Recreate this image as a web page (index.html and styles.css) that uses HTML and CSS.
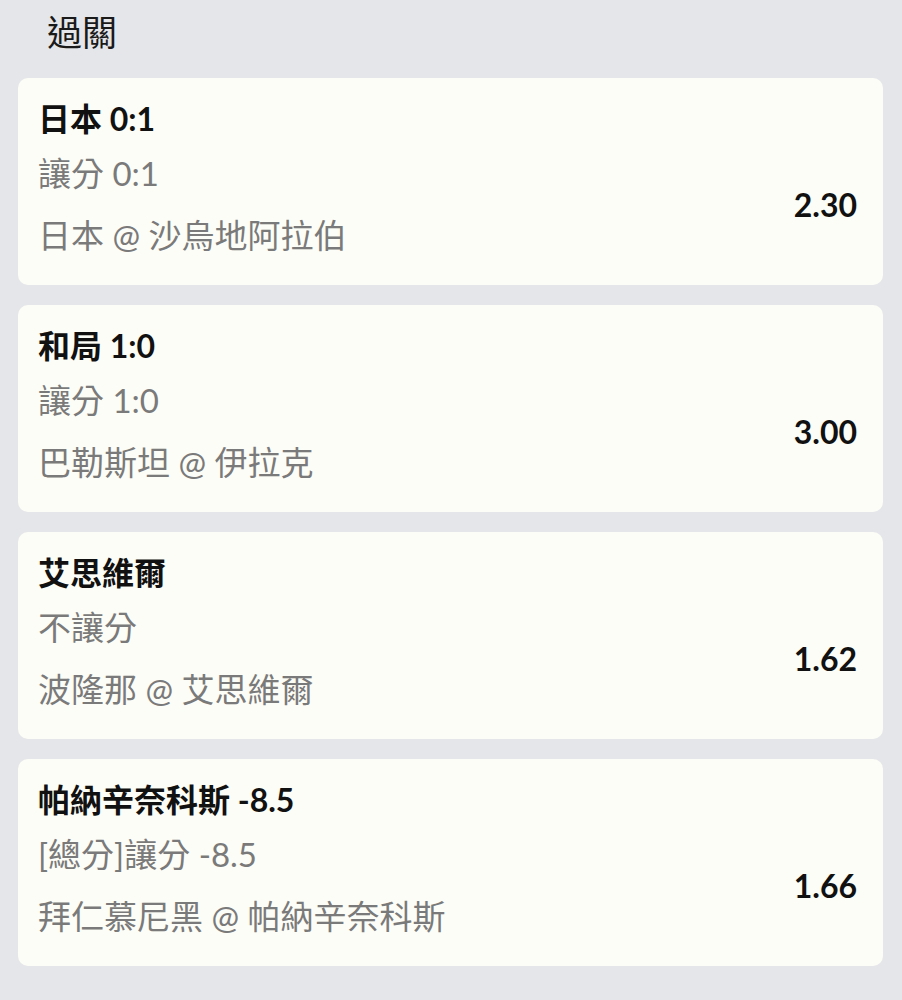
FILE: index.html
```html
<!DOCTYPE html>
<html lang="zh-Hant">
<head>
  <meta charset="UTF-8" />
  <meta name="viewport" content="width=device-width, initial-scale=1.0"/>
  <title>過關</title>
  <link rel="stylesheet" href="styles.css">
</head>
<body>
  <header>過關</header>
  <div class="list">
    <div class="card">
      <div class="pick">日本 0:1</div>
      <div class="row">
        <div class="info">
          <div class="market">讓分 0:1</div>
          <div class="match">日本 @ 沙烏地阿拉伯</div>
        </div>
        <div class="odds">2.30</div>
      </div>
    </div>

    <div class="card">
      <div class="pick">和局 1:0</div>
      <div class="row">
        <div class="info">
          <div class="market">讓分 1:0</div>
          <div class="match">巴勒斯坦 @ 伊拉克</div>
        </div>
        <div class="odds">3.00</div>
      </div>
    </div>

    <div class="card">
      <div class="pick">艾思維爾</div>
      <div class="row">
        <div class="info">
          <div class="market">不讓分</div>
          <div class="match">波隆那 @ 艾思維爾</div>
        </div>
        <div class="odds">1.62</div>
      </div>
    </div>

    <div class="card">
      <div class="pick">帕納辛奈科斯 -8.5</div>
      <div class="row">
        <div class="info">
          <div class="market">[總分]讓分 -8.5</div>
          <div class="match">拜仁慕尼黑 @ 帕納辛奈科斯</div>
        </div>
        <div class="odds">1.66</div>
      </div>
    </div>
  </div>
</body>
</html>
```

FILE: styles.css
```css
body {
  margin: 0;
  font-family: 'Lato', 'Noto Sans CJK TC', sans-serif;
  background-color: #e5e6e9;
  color: #111;
}

header {
  padding: 12px 47px 0;
  font-size: 35px;
  line-height: 40px;
  color: #1a1a1a;
}

.list {
  display: flex;
  flex-direction: column;
  gap: 20px;
  margin: 26px 19px 0 18px;
}

.card {
  background: #fdfdf7;
  border-radius: 10px;
  padding: 21px 26px 30px 20px;
}

.pick {
  font-size: 32px;
  line-height: 40px;
  font-weight: bold;
  color: #111;
}

.row {
  display: flex;
  align-items: center;
  justify-content: space-between;
  margin-top: 14px;
}

.market,
.match {
  font-size: 33px;
  line-height: 40px;
  color: #7a7a7a;
}

.match {
  margin-top: 22px;
}

.odds {
  font-size: 32px;
  font-weight: bold;
  color: #111;
}
```
